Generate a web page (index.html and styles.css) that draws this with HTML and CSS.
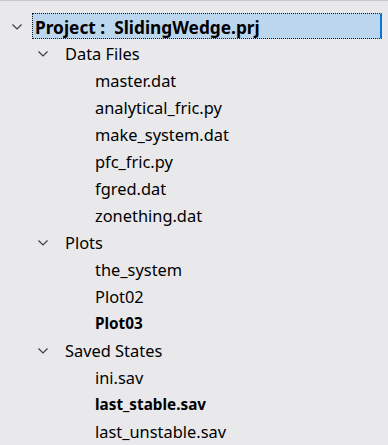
FILE: index.html
```html
<!DOCTYPE html>
<html lang="en">
<head>
<meta charset="utf-8">
<title>Project tree</title>
<link rel="stylesheet" href="styles.css">
</head>
<body>
<div class="pane">
  <ul class="tree">
    <li class="row lvl0">
      <svg class="twisty" width="10" height="6" viewBox="0 0 10 6"><path d="M0.5 0.5 L5 5 L9.5 0.5" /></svg>
      <span class="label selected">Project :&nbsp; SlidingWedge.prj</span>
    </li>
    <li class="row lvl1">
      <svg class="twisty" width="10" height="6" viewBox="0 0 10 6"><path d="M0.5 0.5 L5 5 L9.5 0.5" /></svg>
      <span class="label">Data Files</span>
    </li>
    <li class="row lvl2"><span class="label">master.dat</span></li>
    <li class="row lvl2"><span class="label">analytical_fric.py</span></li>
    <li class="row lvl2"><span class="label">make_system.dat</span></li>
    <li class="row lvl2"><span class="label">pfc_fric.py</span></li>
    <li class="row lvl2"><span class="label">fgred.dat</span></li>
    <li class="row lvl2"><span class="label">zonething.dat</span></li>
    <li class="row lvl1">
      <svg class="twisty" width="10" height="6" viewBox="0 0 10 6"><path d="M0.5 0.5 L5 5 L9.5 0.5" /></svg>
      <span class="label">Plots</span>
    </li>
    <li class="row lvl2"><span class="label">the_system</span></li>
    <li class="row lvl2"><span class="label">Plot02</span></li>
    <li class="row lvl2"><span class="label bold">Plot03</span></li>
    <li class="row lvl1">
      <svg class="twisty" width="10" height="6" viewBox="0 0 10 6"><path d="M0.5 0.5 L5 5 L9.5 0.5" /></svg>
      <span class="label">Saved States</span>
    </li>
    <li class="row lvl2"><span class="label">ini.sav</span></li>
    <li class="row lvl2"><span class="label bold">last_stable.sav</span></li>
    <li class="row lvl2"><span class="label">last_unstable.sav</span></li>
  </ul>
</div>
</body>
</html>
```
FILE: styles.css
```css
html, body {
  margin: 0;
  padding: 0;
  background: #e9e9ec;
}
.pane {
  width: 388px;
  height: 445px;
  box-sizing: border-box;
  border-top: 1px solid #c9c9cc;
  padding-top: 12px;
  font-family: "Noto Sans", "Open Sans", sans-serif;
  font-size: 16.4px;
  color: #000;
  overflow: hidden;
}
.tree {
  list-style: none;
  margin: 0;
  padding: 0;
}
.row {
  display: flex;
  align-items: center;
  height: 27px;
  white-space: pre;
}
.twisty {
  flex: none;
  fill: none;
  stroke: #3c3c3c;
  stroke-width: 1.2;
}
.lvl0 { padding-left: 12px; padding-right: 6px; }
.lvl0 .twisty { margin-right: 10px; }
.lvl1 { padding-left: 38px; }
.lvl1 .twisty { margin-right: 17px; }
.lvl2 { padding-left: 95px; }
.label {
  line-height: 27px;
  align-self: flex-start;
}
.bold {
  font-weight: 700;
  font-size: 15.3px;
}
.selected {
  flex: 1;
  align-self: flex-start;
  height: 26px;
  box-sizing: border-box;
  padding: 2px 0 0 2px;
  line-height: 24px;
  font-size: 17.3px;
  font-weight: 700;
  background: #bcd6ee;
  border: 1px dotted #1a1a1a;
  border-right: 2px solid #0a74d6;
}
```
